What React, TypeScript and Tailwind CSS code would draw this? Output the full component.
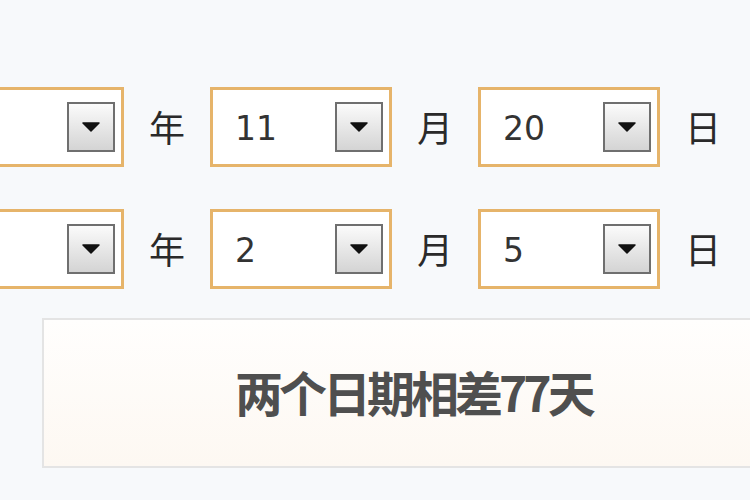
const rows = [
  { year: '', month: '11', day: '20' },
  { year: '', month: '2', day: '5' },
];

function Arrow() {
  return (
    <div className="flex h-[50px] w-[48px] shrink-0 items-center justify-center border-2 border-[#6f6f6f] bg-gradient-to-b from-[#fbfbfb] to-[#d4d4d4]">
      <svg width="18" height="10" viewBox="0 0 18 10">
        <path d="M1 1 L17 1 L9 9 Z" fill="#111" stroke="#111" strokeWidth="1.5" strokeLinejoin="round" />
      </svg>
    </div>
  );
}

function Select({ value }: { value: string }) {
  return (
    <div className="flex h-[80px] w-[182px] shrink-0 items-center justify-between border-[3px] border-[#e6b46a] bg-white pl-[22px] pr-[6px]">
      <span className="pt-[4px] text-[33px] text-[#333] [font-family:'DejaVu_Sans',sans-serif]">{value}</span>
      <Arrow />
    </div>
  );
}

function Label({ text }: { text: string }) {
  return (
    <span className="w-[38px] shrink-0 pb-[2px] text-center text-[36px] leading-none text-[#2a2a2a] [font-family:'Noto_Sans_CJK_SC',sans-serif]">
      {text}
    </span>
  );
}

export default function App() {
  return (
    <div className="h-[500px] w-[750px] overflow-hidden bg-[#f7f9fb] pt-[87px]">
      <div className="flex flex-col gap-[42px]">
        {rows.map((r, i) => (
          <div key={i} className="ml-[-58px] flex items-center gap-[24px]">
            <Select value={r.year} />
            <Label text="年" />
            <Select value={r.month} />
            <Label text="月" />
            <Select value={r.day} />
            <Label text="日" />
          </div>
        ))}
      </div>
      <div className="ml-[42px] mt-[29px] flex h-[150px] w-[740px] items-center border-2 border-[#e4e4e4] bg-gradient-to-b from-[#fffefd] to-[#fdf8f2] pb-[4px]">
        <span className="ml-[191px] text-[48px] font-bold leading-none tracking-[-4px] text-[#4f4f4f] [font-family:'Noto_Sans_CJK_SC',sans-serif]">
          两个日期相差77天
        </span>
      </div>
    </div>
  );
}
